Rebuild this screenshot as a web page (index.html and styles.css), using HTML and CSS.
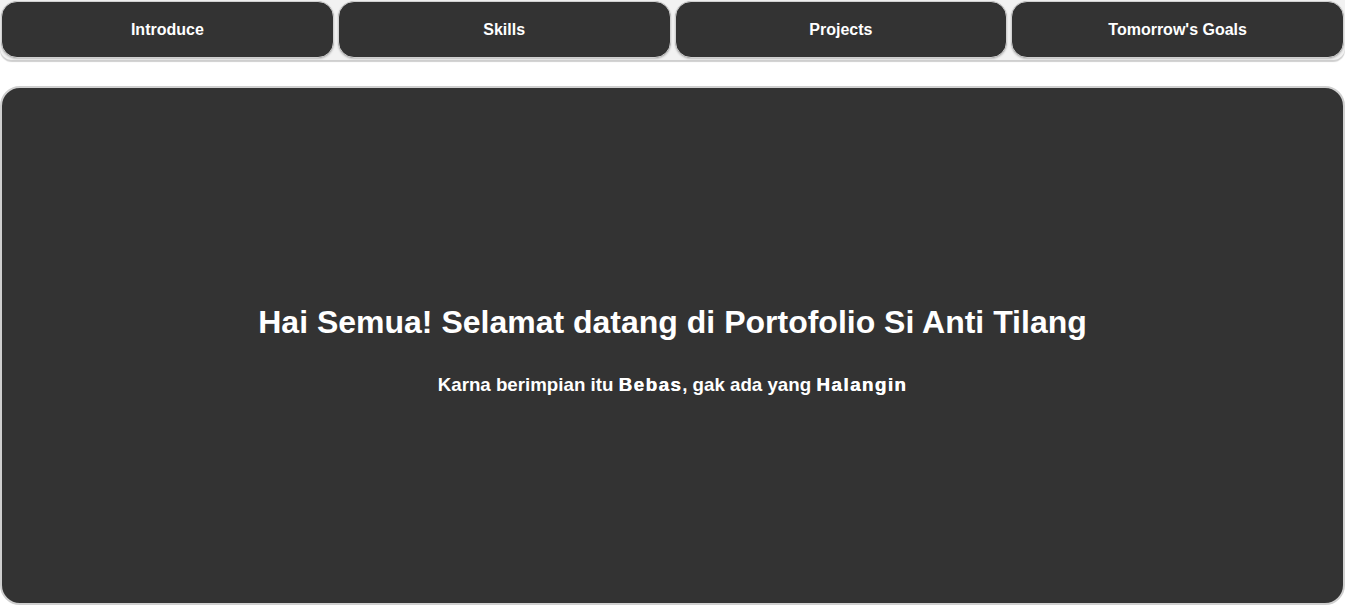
FILE: index.html
```html
<!DOCTYPE html>
<html lang="id">
<head>
<meta charset="utf-8">
<title>Portofolio</title>
<link rel="stylesheet" href="styles.css">
</head>
<body>
<nav class="nav">
  <a class="nav-btn" href="#">Introduce</a>
  <a class="nav-btn" href="#">Skills</a>
  <a class="nav-btn" href="#">Projects</a>
  <a class="nav-btn" href="#">Tomorrow's Goals</a>
</nav>
<main class="hero">
  <h1 class="hero-title">Hai Semua! Selamat datang di Portofolio Si Anti Tilang</h1>
  <p class="hero-sub">Karna berimpian itu <strong>Bebas</strong>, gak ada yang <strong>Halangin</strong></p>
</main>
</body>
</html>
```
FILE: styles.css
```css
* { box-sizing: border-box; }
html, body { margin: 0; padding: 0; background: #fff; }
body {
  font-family: "Liberation Sans", Arial, sans-serif;
  height: 613px;
  overflow: hidden;
}
.nav {
  display: grid;
  grid-template-columns: repeat(4, 1fr);
  gap: 4px;
  padding: 1px 1px 2px 1px;
  background: #f2f2f2;
  border-radius: 0 0 12px 12px;
  box-shadow: 0 2px 1px #cfcfcf;
  height: 60px;
}
.nav-btn {
  display: flex;
  align-items: center;
  justify-content: center;
  height: 57px;
  background: #333;
  color: #fff;
  text-decoration: none;
  font-weight: bold;
  font-size: 16px;
  border-radius: 16px;
  border: 1px solid #d0d0d0;
  box-shadow: 0 1px 2px #bbb;
}
.hero {
  margin-top: 26px;
  height: 519px;
  background: #333;
  border: 2px solid #cfcfcf;
  border-radius: 20px;
  display: flex;
  flex-direction: column;
  align-items: center;
  justify-content: center;
  color: #fff;
  padding-top: 9px;
}
.hero-title {
  margin: 0;
  font-size: 32px;
  font-weight: bold;
}
.hero-sub {
  margin: 33px 0 0 0;
  font-size: 18.72px;
  font-weight: bold;
}
.hero-sub strong {
  letter-spacing: 1.5px;
  text-shadow: 0.5px 0 0 #fff;
}
```
